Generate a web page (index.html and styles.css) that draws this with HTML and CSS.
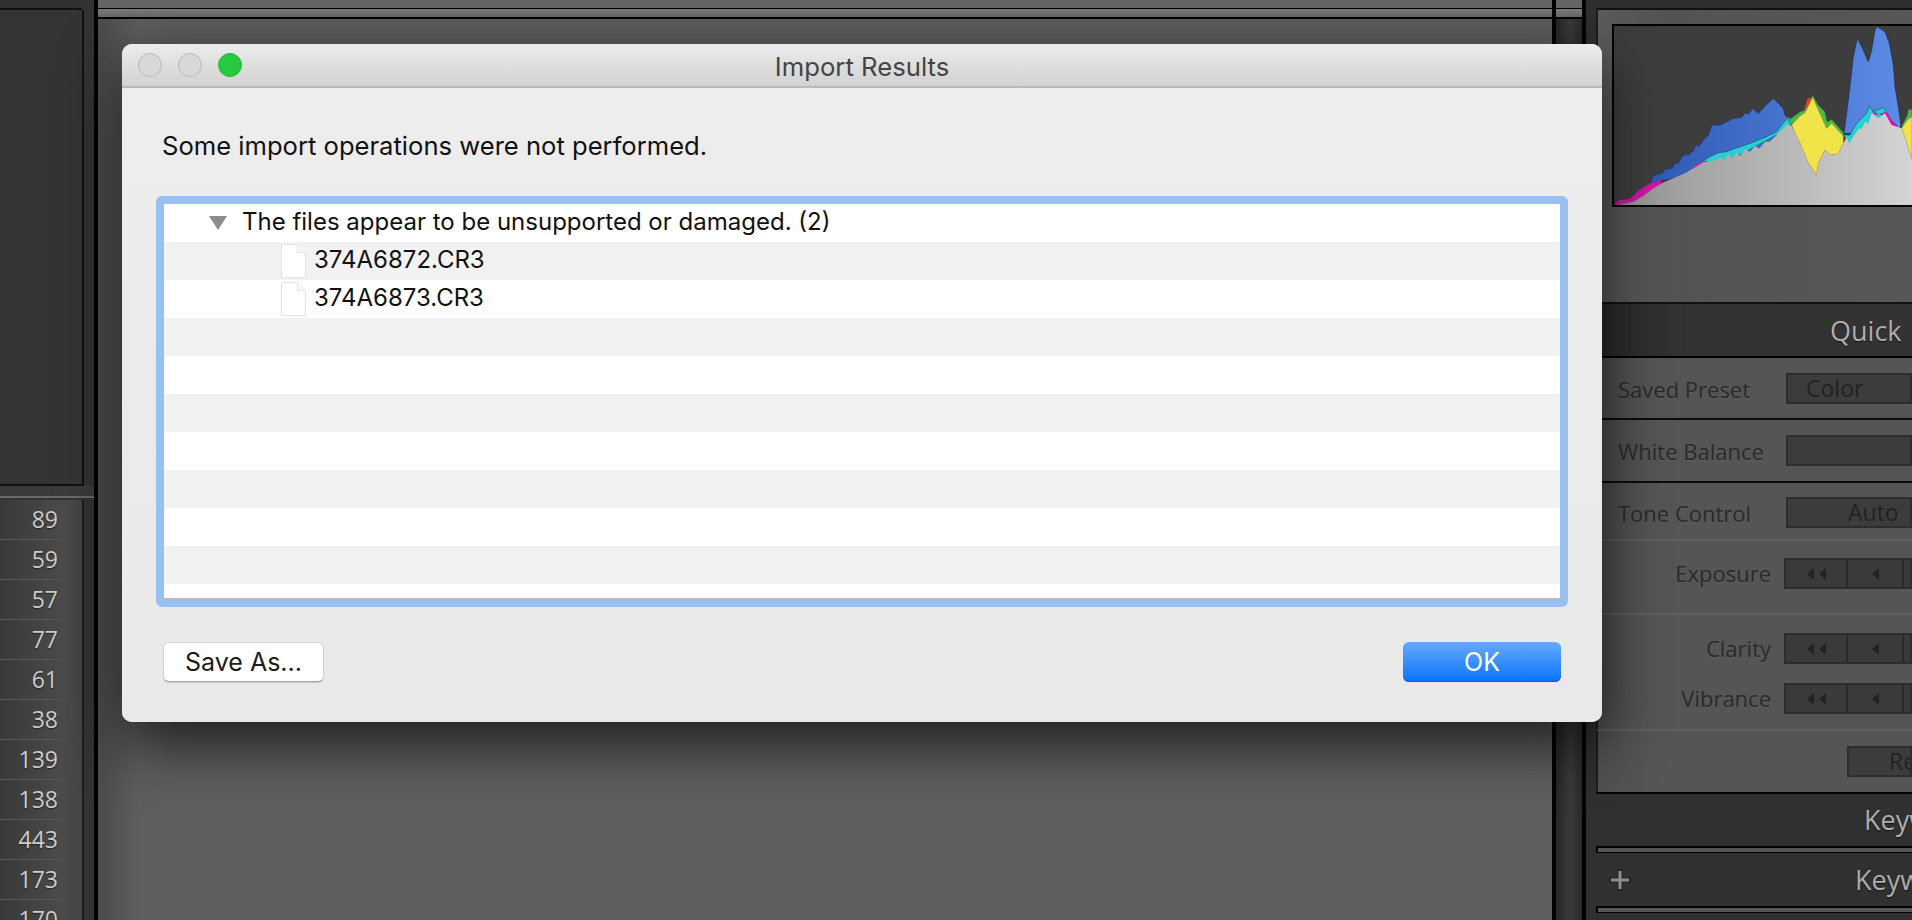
FILE: index.html
```html
<!DOCTYPE html>
<html lang="en">
<head>
  <meta charset="UTF-8" />
  <title>Import Results</title>
  <link rel="stylesheet" href="styles.css">
</head>
<body>

<div class="app">
  <aside class="left">
    <div class="left-top"></div>
    <div class="left-panel"></div>
    <div class="left-band"></div>
    <div class="left-rule"></div>
    <ul class="counts">
      <li>89</li>
      <li>59</li>
      <li>57</li>
      <li>77</li>
      <li>61</li>
      <li>38</li>
      <li>139</li>
      <li>138</li>
      <li>443</li>
      <li>173</li>
      <li>170</li>
    </ul>
  </aside>

  <main class="center">
    <div class="strip strip-a"></div>
    <div class="strip strip-b"></div>
    <div class="stage"></div>
  </main>

  <div class="gutter">
    <div class="strip strip-a"></div>
    <div class="strip strip-b"></div>
    <div class="gutter-fill"></div>
  </div>

  <aside class="right">
    <section class="hist-panel">
      <div class="hist-frame">
        <svg class="hist" width="298" height="179" viewBox="132 78 894 537">
          <defs>
            <linearGradient id="blueFill" gradientUnits="userSpaceOnUse" x1="240" y1="0" x2="1000" y2="0">
              <stop offset="0" stop-color="#2e59b5" />
              <stop offset="1" stop-color="#5d8ce6" />
            </linearGradient>
            <linearGradient id="greyFill" gradientUnits="userSpaceOnUse" x1="135" y1="0" x2="1026" y2="0">
              <stop offset="0" stop-color="#939393" />
              <stop offset="1" stop-color="#d4d4d4" />
            </linearGradient>
          </defs>
          <polygon class="h-blue" points="240,548 250,525 275,520 285,508 305,505 315,490 325,490 335,470 348,462 355,465 372,450 378,432 385,440 400,420 415,405 425,375 450,375 470,365 490,355 515,352 525,338 535,342 548,325 565,340 585,318 610,295 625,310 640,325 645,345 658,356 640,420 400,520" />
          <polygon class="h-blue" points="822,400 835,300 845,215 850,170 862,115 875,140 895,185 905,150 915,90 922,80 945,95 958,130 970,195 975,260 985,320 993,378 985,385 900,400" />
          <polygon class="h-cyan" points="400,482 420,470 445,458 470,455 490,447 520,437 545,428 570,418 590,410 620,395 640,368 658,350 665,380 500,470 430,490" />
          <polygon class="h-cyan" points="820,405 840,405 858,372 875,355 890,340 898,318 910,335 940,322 955,345 960,400 840,432" />
          <polygon class="h-magenta" points="135,615 145,600 180,598 205,572 240,550 272,540 276,552 200,610" />
          <polygon class="h-magenta" points="370,498 385,492 400,482 410,486 380,505" />
          <polygon class="h-magenta" points="905,332 915,345 950,335 965,360 985,378 970,385 945,350" />
          <polygon class="h-green" points="655,360 670,350 690,335 705,330 728,285 745,315 765,335 772,365 785,358 805,380 822,400 815,430 680,400" />
          <polygon class="h-green" points="995,378 1012,345 1015,328 1026,328 1026,400" />
          <polygon class="h-red" points="702,332 712,296 726,292 716,320" />
          <polygon class="h-yellow" points="665,375 690,348 705,338 728,292 745,330 770,385 785,370 820,408 820,430 805,462 780,465 765,450 745,490 740,525 715,490 690,430 675,400" />
          <polygon class="h-yellow" points="995,384 1012,360 1026,350 1026,480 1010,430" />
          <polygon class="h-grey" points="135,617 190,605 220,588 250,565 285,545 345,520 400,487 440,480 450,470 462,480 475,462 485,475 500,458 510,468 525,448 540,455 555,438 568,446 585,425 600,425 620,405 650,375 665,378 690,430 715,490 740,525 745,490 765,450 780,465 805,462 820,430 830,412 838,430 850,410 860,395 868,385 875,388 885,365 895,372 905,340 925,355 945,340 965,375 985,382 995,384 1010,430 1026,480 1026,620 135,620" />
        </svg>
      </div>
    </section>

    <header class="head head-quick">Quick Develop</header>

    <div class="row row-select row-tall">
      <span class="label">Saved Preset</span>
      <span class="select">Color</span>
    </div>
    <div class="row row-select row-wb">
      <span class="label">White Balance</span>
      <span class="select"></span>
    </div>
    <div class="row row-select row-tone">
      <span class="label">Tone Control</span>
      <span class="select select-auto">Auto</span>
    </div>

    <div class="row row-exposure">
      <span class="label label-right">Exposure</span>
      <div class="stepper">
        <span class="step step-wide"><i class="tri"></i><i class="tri"></i></span>
        <span class="step step-mid"><i class="tri"></i></span>
        <span class="step"></span>
      </div>
    </div>

    <div class="row-pair">
      <div class="pair-line">
        <span class="label label-right">Clarity</span>
        <div class="stepper">
          <span class="step step-wide"><i class="tri"></i><i class="tri"></i></span>
          <span class="step step-mid"><i class="tri"></i></span>
          <span class="step"></span>
        </div>
      </div>
      <div class="pair-line">
        <span class="label label-right">Vibrance</span>
        <div class="stepper">
          <span class="step step-wide"><i class="tri"></i><i class="tri"></i></span>
          <span class="step step-mid"><i class="tri"></i></span>
          <span class="step"></span>
        </div>
      </div>
    </div>

    <div class="row row-reset">
      <span class="reset">Reset All</span>
    </div>

    <header class="head head-key">Keywording</header>
    <div class="bar"></div>
    <header class="head head-list">
      <svg class="plus" width="24" height="24" viewBox="0 0 24 24">
        <path d="M9 1h6v8h8v6h-8v8H9v-8H1V9h8z" fill="#262626" />
        <path d="M10.500 3h3v7.500h7.500v3h-7.500V21h-3v-7.500H3v-3h7.500z" fill="#8f8f8f" />
      </svg>
      <span>Keyword List</span>
    </header>
    <div class="bar"></div>
  </aside>
</div>

<div class="dialog">
  <div class="titlebar">
    <span class="light"></span>
    <span class="light"></span>
    <span class="light light-green"></span>
    <span class="title">Import Results</span>
  </div>
  <div class="dialog-body">
    <p class="message">Some import operations were not performed.</p>
    <div class="tree">
      <div class="tree-row">
        <span class="disclosure"></span>
        <span class="tree-text">The files appear to be unsupported or damaged. (2)</span>
      </div>
      <div class="tree-row file-row">
        <svg class="doc" width="25" height="34" viewBox="0 0 25 34">
          <path d="M.5.500h16l8 8v25H.500z" fill="#fff" stroke="#e2e2e2" />
          <path d="M16.500.500v8h8" fill="#f7f7f7" stroke="#e6e6e6" />
        </svg>
        <span class="tree-text">374A6872.CR3</span>
      </div>
      <div class="tree-row file-row">
        <svg class="doc" width="25" height="34" viewBox="0 0 25 34">
          <path d="M.5.500h16l8 8v25H.500z" fill="#fff" stroke="#e2e2e2" />
          <path d="M16.500.500v8h8" fill="#f7f7f7" stroke="#e6e6e6" />
        </svg>
        <span class="tree-text">374A6873.CR3</span>
      </div>
      <div class="tree-row"></div>
      <div class="tree-row"></div>
      <div class="tree-row"></div>
      <div class="tree-row"></div>
      <div class="tree-row"></div>
      <div class="tree-row"></div>
      <div class="tree-row"></div>
    </div>
    <div class="buttons">
      <button class="btn btn-save">Save As...</button>
      <button class="btn btn-ok">OK</button>
    </div>
  </div>
</div>

</body>
</html>
```

FILE: styles.css
```css
html, body {
  margin: 0;
  height: 100%;
  overflow: hidden;
  background: #333;
}
.app {
  display: flex;
  width: 1912px;
  height: 920px;
  overflow: hidden;
  font-family: "Open Sans", sans-serif;
}

/* left panel */
.left {
  width: 94px;
  flex: none;
  background: #333;
  border-right: 4px solid #000;
  display: flex;
  flex-direction: column;
}
.left-top {
  height: 8px;
  background: #313131;
  border-bottom: 2px solid #111;
  margin-right: 12px;
}
.left-panel {
  height: 474px;
  margin-right: 10px;
  background: #343434;
  border-right: 2px solid #111;
  border-bottom: 2px solid #111;
}
.left-band {
  height: 10px;
  background: #3b3b3b;
}
.left-rule {
  height: 2px;
  background: #6a6a6a;
  margin-bottom: 2px;
}
.counts {
  list-style: none;
  margin: 0;
  padding: 0;
  width: 82px;
  border-right: 2px solid #1d1d1d;
  flex: 1;
  overflow: hidden;
  background: linear-gradient(90deg, #383838, #4b4b4b 75%, #444);
}
.counts li {
  box-sizing: border-box;
  width: 66px;
  height: 40px;
  line-height: 39px;
  padding-right: 8px;
  text-align: right;
  font-size: 23px;
  color: #cdcdcd;
  border-bottom: 1px solid #575757;
  text-shadow: 0 1px 1px #222;
}

/* center */
.center {
  width: 1454px;
  flex: none;
  display: flex;
  flex-direction: column;
}
.strip {
  flex: none;
  box-sizing: border-box;
}
.strip-a {
  height: 9px;
  background: #666;
  border-bottom: 1px solid #000;
}
.strip-b {
  height: 10px;
  background: linear-gradient(#7c7c7c, #686868);
  border-bottom: 2px solid #000;
}
.stage {
  flex: 1;
  background: linear-gradient(90deg, #4d4d4d, #4d4d4d 6px, #5e5e5e 40px, #5e5e5e);
}
.gutter {
  width: 26px;
  flex: none;
  border-left: 4px solid #000;
  border-right: 4px solid #000;
  display: flex;
  flex-direction: column;
}
.gutter-fill {
  flex: 1;
  background: linear-gradient(90deg, #262626, #3a3a3a 55%, #2a2a2a);
}

/* right panel */
.right {
  box-sizing: border-box;
  width: 326px;
  flex: none;
  background: #2f2f2f;
  padding: 8px 0 0 10px;
  display: flex;
  flex-direction: column;
  overflow: hidden;
}
.hist-panel {
  box-sizing: border-box;
  height: 294px;
  flex: none;
  border-top: 2px solid #111;
  border-left: 2px solid #1c1c1c;
  padding: 14px 0 0 14px;
  background: linear-gradient(90deg, #5c5c5c, #535353 20%, #575757);
}
.hist-frame {
  border: 2px solid #000;
  border-right: none;
  height: 179px;
  background: #3d3d3d;
}
.hist {
  display: block;
}
.h-blue {
  fill: url(#blueFill);
  stroke: #1e2b55;
  stroke-width: 2;
}
.h-cyan {
  fill: #26cfd4;
  stroke: #123c44;
  stroke-width: 1.500;
}
.h-magenta {
  fill: #d016a8;
}
.h-green {
  fill: #49b84e;
  stroke: #254a28;
  stroke-width: 1.500;
}
.h-red {
  fill: #d9452c;
}
.h-yellow {
  fill: #f1e448;
  stroke: #8a8420;
  stroke-width: 1.500;
}
.h-grey {
  fill: url(#greyFill);
}
.head {
  box-sizing: border-box;
  flex: none;
  display: flex;
  align-items: center;
  white-space: nowrap;
  background: #303030;
  color: #adadad;
  font-size: 27px;
  text-shadow: 0 1px 1px #151515;
}
.head-quick {
  height: 56px;
  padding-left: 234px;
  word-spacing: 10px;
  border-top: 2px solid #111;
  border-bottom: 2px solid #000;
  background: linear-gradient(90deg, #2a2a2a, #333 30%);
}
.head-key {
  height: 52px;
  padding-left: 268px;
  padding-bottom: 2px;
}
.head-list {
  height: 53px;
  padding-left: 12px;
}
.head-list span {
  margin-left: 223px;
}
.plus {
  flex: none;
}
.bar {
  box-sizing: border-box;
  height: 7px;
  flex: none;
  background: #555;
  border-top: 2px solid #000;
  border-bottom: 1px solid #000;
  border-left: 2px solid #000;
}
.row, .row-pair {
  box-sizing: border-box;
  flex: none;
  display: flex;
  align-items: center;
  border-left: 2px solid #1c1c1c;
  background: linear-gradient(90deg, #505050, #555 20%);
}
.row-select {
  padding-left: 20px;
}
.row-tall {
  height: 62px;
  border-bottom: 2px solid #0c0c0c;
}
.row-wb {
  height: 63px;
  border-bottom: 2px solid #0c0c0c;
}
.row-tone {
  height: 58px;
  padding-top: 2px;
  border-bottom: 2px solid #606060;
}
.row-exposure {
  height: 74px;
  padding-bottom: 7px;
  border-bottom: 2px solid #606060;
}
.row-pair {
  height: 116px;
  flex-direction: column;
  align-items: stretch;
  gap: 19px;
  padding-top: 18px;
  border-bottom: 2px solid #606060;
}
.pair-line {
  display: flex;
  align-items: center;
}
.row-reset {
  height: 63px;
  padding-left: 249px;
  border-bottom: 2px solid #000;
}
.label {
  font-size: 22px;
  color: #2a2a2a;
  white-space: nowrap;
  text-shadow: 0 1px 0 rgba(255, 255, 255, .07);
}
.row-select .label {
  width: 168px;
  flex: none;
  margin-top: 1px;
}
.label-right {
  box-sizing: border-box;
  width: 173px;
  flex: none;
  margin-top: -1px;
  text-align: right;
}
.select, .reset {
  box-sizing: border-box;
  height: 31px;
  line-height: 27px;
  flex: 1;
  background: #3c3c3c;
  border: 2px solid #2d2d2d;
  color: #222;
  font-size: 23px;
  padding-left: 18px;
  white-space: nowrap;
  overflow: hidden;
}
.select-auto {
  padding-left: 60px;
}
.reset {
  padding-left: 40px;
}
.stepper {
  display: flex;
  flex: 1;
  height: 31px;
  margin-left: 13px;
  background: #3a3a3a;
  border: 2px solid #2d2d2d;
  box-sizing: border-box;
}
.step {
  flex: 1;
  display: flex;
  align-items: center;
  justify-content: center;
  gap: 5px;
}
.step-wide {
  flex: none;
  width: 60px;
  border-right: 2px solid #2a2a2a;
}
.step-mid {
  flex: none;
  width: 54px;
  border-right: 2px solid #2a2a2a;
}
.tri {
  width: 0;
  height: 0;
  border-top: 6px solid transparent;
  border-bottom: 6px solid transparent;
  border-right: 7px solid #232323;
}

/* dialog over the app */
.dialog {
  position: absolute;
  left: 122px;
  top: 44px;
  width: 1480px;
  height: 678px;
  display: flex;
  flex-direction: column;
  border-radius: 10px;
  overflow: hidden;
  background: #ececec;
  font-family: Inter, sans-serif;
  box-shadow: 0 20px 60px rgba(0, 0, 0, .7);
}
.titlebar {
  box-sizing: border-box;
  height: 44px;
  flex: none;
  display: flex;
  align-items: center;
  gap: 16px;
  padding-left: 16px;
  position: relative;
  background: linear-gradient(#ececec, #d2d2d2);
  border-bottom: 2px solid #b9b9b9;
}
.light {
  box-sizing: border-box;
  width: 24px;
  height: 24px;
  border-radius: 50%;
  background: #d8d8d8;
  border: 1px solid #b8b8b8;
}
.light-green {
  background: #27c93f;
  border-color: #22b838;
}
.title {
  position: absolute;
  left: 0;
  right: 0;
  top: 7px;
  text-align: center;
  font-size: 25.700px;
  color: #444;
}
.dialog-body {
  flex: 1;
  display: flex;
  flex-direction: column;
  padding: 0 34px;
  background: linear-gradient(#ededed, #e9e9e9);
}
.message {
  margin: 38px 0 0 6px;
  height: 40px;
  line-height: 40px;
  font-size: 25.600px;
  color: #111;
}
.tree {
  box-sizing: border-box;
  height: 411px;
  margin-top: 30px;
  background: #fff;
  border: solid #98c1f0;
  border-width: 8px 8px 7px;
  border-radius: 6px;
  overflow: hidden;
  box-shadow: inset 0 -2px 0 #bbb;
}
.tree-row {
  box-sizing: border-box;
  height: 38px;
  display: flex;
  align-items: center;
  font-size: 24px;
  color: #111;
  white-space: nowrap;
}
.tree-row:nth-child(even) {
  background: #f2f2f2;
}
.tree-text {
  margin-top: -4px;
}
.disclosure {
  width: 0;
  height: 0;
  margin: 0 15px 0 45px;
  border-left: 9px solid transparent;
  border-right: 9px solid transparent;
  border-top: 14px solid #8c8c8c;
}
.file-row {
  padding-left: 117px;
}
.doc {
  flex: none;
  margin-right: 8px;
}
.buttons {
  display: flex;
  justify-content: space-between;
  padding: 0 7px;
  margin-top: 35px;
}
.btn {
  box-sizing: border-box;
  height: 40px;
  border-radius: 6px;
  font-family: Inter, sans-serif;
  font-size: 25px;
  padding: 0;
}
.btn-save {
  width: 161px;
  background: #fff;
  border: 1px solid #d4d4d4;
  border-bottom-color: #a8a8a8;
  color: #1c1c1c;
  box-shadow: 0 1px 1px rgba(0, 0, 0, .15);
}
.btn-ok {
  width: 158px;
  border: none;
  color: #fff;
  background: linear-gradient(#66aaff, #0a74fb);
  box-shadow: inset 0 -1px 0 #0a60d8;
}
```
